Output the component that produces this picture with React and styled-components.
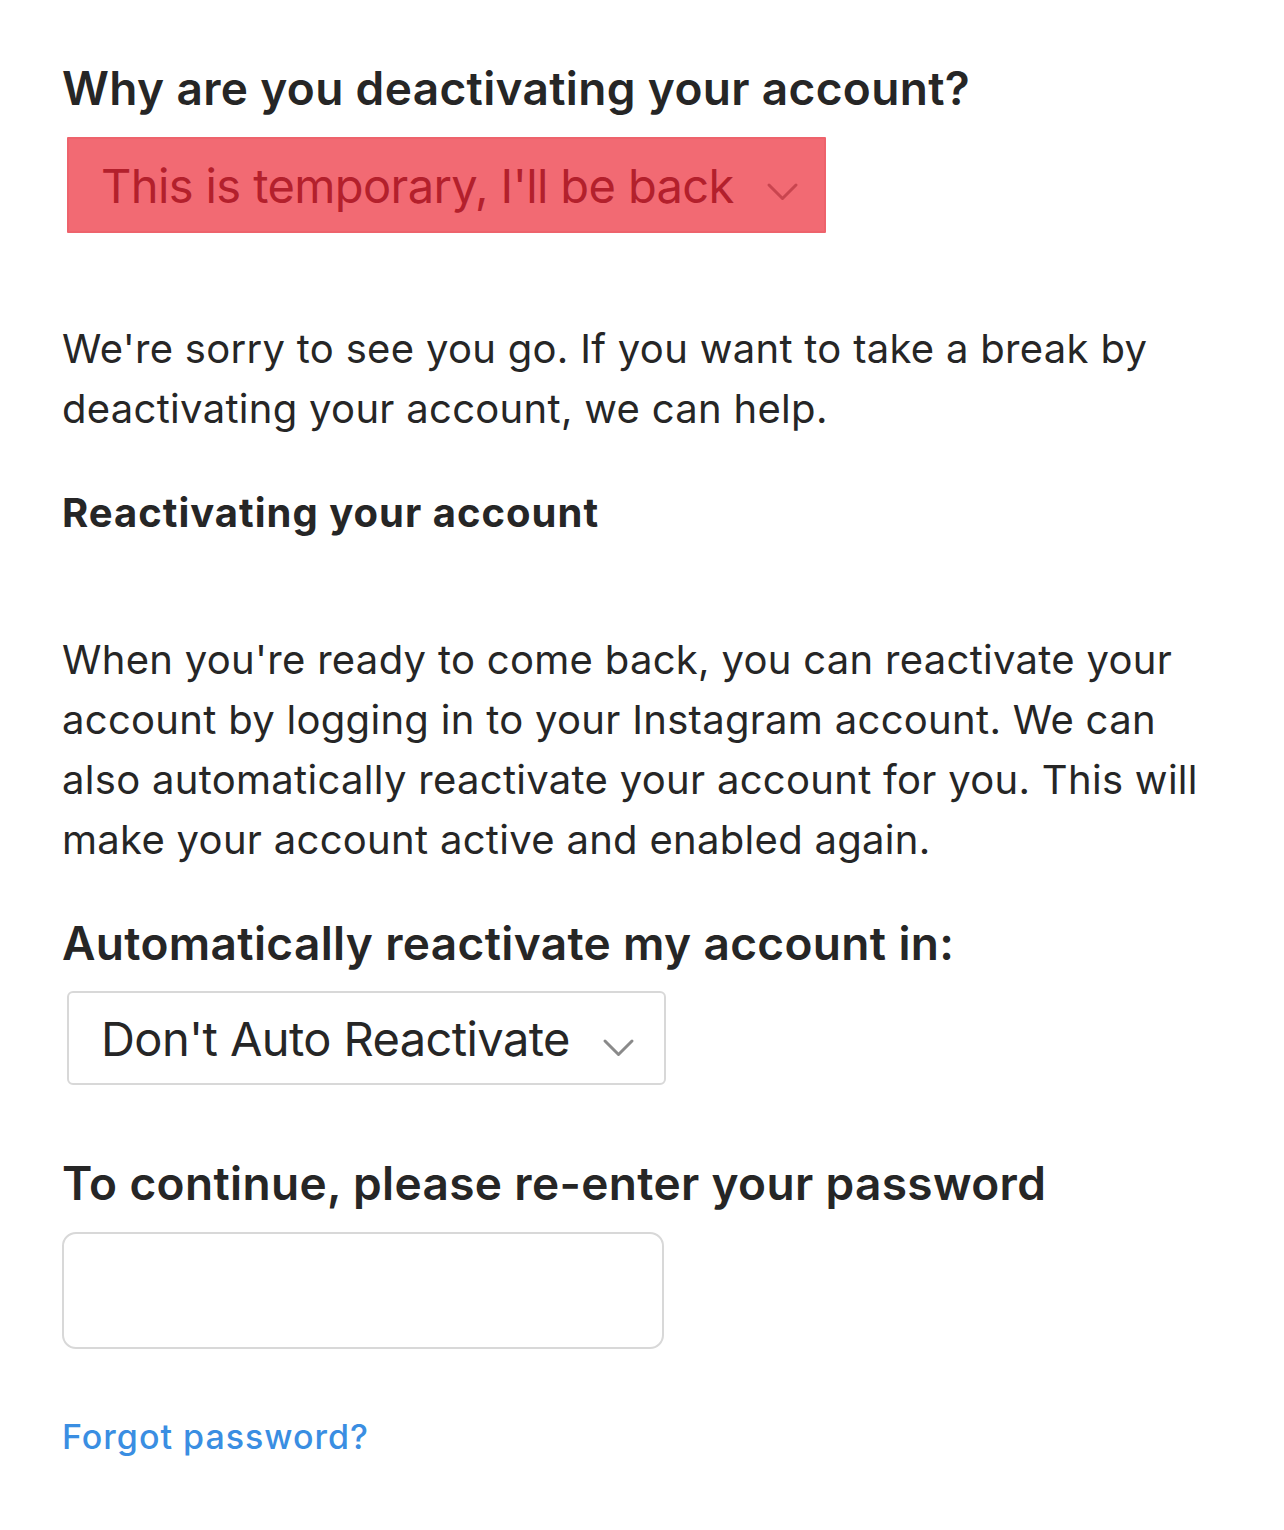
import React from "react";
import styled, { createGlobalStyle } from "styled-components";

const GlobalStyle = createGlobalStyle`
  body {
    margin: 0;
    background: #ffffff;
    font-family: Inter, "Noto Sans", "Liberation Sans", sans-serif;
    color: #262626;
  }
`;

const Page = styled.div`
  display: flex;
  flex-direction: column;
  align-items: flex-start;
  padding: 58px 0 60px 62px;
`;

const Heading = styled.h2`
  margin: ${(p) => p.$top || 0}px 0 0;
  font-size: 46px;
  font-weight: 600;
  letter-spacing: 0.35px;
  line-height: 60px;
  color: #262626;
  white-space: nowrap;
`;

const SubHeading = styled.h3`
  margin: ${(p) => p.$top || 0}px 0 0;
  font-size: 40px;
  font-weight: 700;
  letter-spacing: 1px;
  line-height: 60px;
  color: #262626;
  white-space: nowrap;
`;

const Paragraph = styled.p`
  margin: ${(p) => p.$top || 0}px 0 0;
  font-size: 40px;
  font-weight: 400;
  letter-spacing: 0.3px;
  line-height: 60px;
  color: #262626;
  white-space: nowrap;
`;

const Select = styled.div`
  margin: ${(p) => p.$top || 0}px 0 0 ${(p) => p.$left || 0}px;
  display: flex;
  align-items: center;
  box-sizing: border-box;
  width: ${(p) => p.$width}px;
  height: ${(p) => p.$height}px;
  padding: 0 30px 0 32px;
  gap: 32px;
  border-radius: ${(p) => (p.$danger ? 1 : 6)}px;
  background: ${(p) => (p.$danger ? "#f26a73" : "#ffffff")};
  border: 2px solid ${(p) => (p.$danger ? "#ee636c" : "#d8d8d8")};
  color: ${(p) => (p.$danger ? "#b3202c" : "#262626")};
  font-size: 47px;
  font-weight: 400;
  letter-spacing: -0.6px;
  white-space: nowrap;
`;

const ChevronWrap = styled.span`
  display: flex;
  margin-top: ${(p) => p.$drop}px;
`;

const Chevron = ({ color, drop }) => (
  <ChevronWrap $drop={drop}>
    <svg width="33" height="21" viewBox="0 0 33 21" fill="none">
      <path d="M3 4l13.5 13.5L30 4" stroke={color} strokeWidth="3" strokeLinecap="round" strokeLinejoin="round" />
    </svg>
  </ChevronWrap>
);

const PasswordInput = styled.input`
  margin-top: ${(p) => p.$top || 0}px;
  box-sizing: border-box;
  width: 602px;
  height: 117px;
  border: 2px solid #d8d8d8;
  border-radius: 14px;
  background: #ffffff;
  font-size: 38px;
  padding: 0 20px;
  outline: none;
`;

const Link = styled.a`
  margin-top: ${(p) => p.$top || 0}px;
  font-size: 34px;
  font-weight: 500;
  letter-spacing: 1px;
  line-height: 60px;
  color: #3a8ee2;
  text-decoration: none;
`;

export default function App() {
  return (
    <>
      <GlobalStyle />
      <Page>
        <Heading>Why are you deactivating your account?</Heading>
        <Select $danger $top={19} $left={5} $width={759} $height={96}>
          This is temporary, I'll be back
          <Chevron color="#c9454f" drop={12} />
        </Select>
        <Paragraph $top={86}>
          We're sorry to see you go. If you want to take a break by
          <br />
          deactivating your account, we can help.
        </Paragraph>
        <SubHeading $top={44}>Reactivating your account</SubHeading>
        <Paragraph $top={87}>
          When you're ready to come back, you can reactivate your
          <br />
          account by logging in to your Instagram account. We can
          <br />
          also automatically reactivate your account for you. This will
          <br />
          make your account active and enabled again.
        </Paragraph>
        <Heading $top={43}>Automatically reactivate my account in:</Heading>
        <Select $top={18} $left={5} $width={599} $height={94}>
          Don't Auto Reactivate
          <Chevron color="#8a8a8a" drop={19} />
        </Select>
        <Heading $top={68}>To continue, please re-enter your password</Heading>
        <PasswordInput type="password" $top={19} />
        <Link href="#" $top={58}>Forgot password?</Link>
      </Page>
    </>
  );
}
